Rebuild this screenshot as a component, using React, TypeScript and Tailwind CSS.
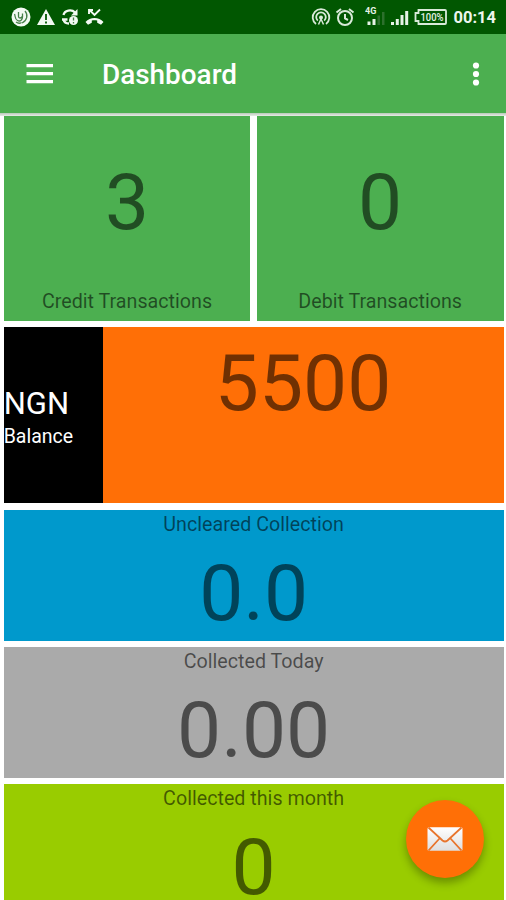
function StatusBar() {
  return (
    <div className="flex h-[34px] shrink-0 items-center justify-between bg-[#015701] pr-[10px] pl-[11px]">
      <div className="flex items-center gap-[5px]">
        <svg width="20" height="20" viewBox="0 0 20 20" fill="none">
          <circle cx="10" cy="10" r="9.5" fill="#f3faf3" />
          <path d="M3.5 7c1 2 0 5 3 6.500s5-1 5-3.500V6.500M7.500 5v4.500c0 2 3 2 3.500 0M14 4c3.500 4 2 9.500-3 12M5 15c2 1.500 4 1.500 5.500.5" stroke="#47804a" strokeWidth="1.3" />
        </svg>
        <svg width="20" height="18" viewBox="0 0 20 18">
          <path d="M10 1L19 17H1Z" fill="#f3faf3" />
          <path d="M10 6v6M10 13.5v2" stroke="#015701" strokeWidth="1.8" />
        </svg>
        <svg width="18" height="18" viewBox="0 0 18 18" fill="none">
          <path d="M2.500 7a6.500 5.500 0 0 1 11.500-2.500M8 15.500C5 15.500 3 14 2.500 11.500M1 11.500h5.500" stroke="#f3faf3" strokeWidth="2.300" />
          <path d="M16.500 1v6.500H10z" fill="#f3faf3" />
          <circle cx="12.500" cy="12.500" r="4.500" fill="#f3faf3" />
          <path d="M12.500 9.500v3M12.500 14v1.500" stroke="#477f48" strokeWidth="1.300" />
        </svg>
        <svg width="19" height="18" viewBox="0 0 19 18" fill="none" className="ml-[1px]">
          <path d="M4 1.500l5.500 5.500L15 1.500M4 6V2h4" stroke="#f3faf3" strokeWidth="1.900" />
          <path d="M.5 14C5 8.500 14 8.500 18.500 14L16 16.800l-3.800-2v-2.300c-1.500-.5-3.900-.5-5.400 0v2.300L3 16.800z" fill="#f3faf3" />
        </svg>
      </div>

      <div className="flex items-center">
        <svg width="20" height="20" viewBox="0 0 20 20" fill="none" stroke="#d9ead9" strokeWidth="1.8">
          <path d="M5 17a8.300 8.300 0 1 1 10 0M6.800 13.700a4.800 4.800 0 1 1 6.400 0" />
          <circle cx="10" cy="10.5" r="2" fill="#d9ead9" stroke="none" />
          <path d="M7.500 17.500L10 12l2.500 5.500" strokeWidth="1.500" />
        </svg>
        <svg width="20" height="20" viewBox="0 0 20 20" fill="none" stroke="#d9ead9" strokeWidth="2" className="ml-[4px]">
          <circle cx="10" cy="11" r="7" />
          <path d="M1.500 5.500L6 2M18.500 5.500L14 2M10 7v4.500l3 1.500" />
        </svg>
        <svg width="21" height="20" viewBox="0 0 21 20" className="ml-[10px]">
          <text x="0" y="7" fontSize="9" fontWeight="700" fontFamily="Roboto, sans-serif" fill="#e6f2e6">4G</text>
          <path d="M2.500 14.500h3V18h-3zM7.500 12h3v6h-3z" fill="#e6f2e6" />
          <path d="M12.500 8.500h2.500V18h-2.500zM17 5h2.500v13H17z" fill="#2d702d" />
        </svg>
        <svg width="19" height="20" viewBox="0 0 19 20" fill="#e6f2e6" className="ml-[4px]">
          <path d="M1 15h3v3H1zM5.800 12h3v6h-3zM10.500 8h3v10h-3zM15.200 4h3v14h-3z" />
        </svg>
        <svg width="33" height="16" viewBox="0 0 33 16" className="ml-[5px]">
          <path d="M4.500 1H31a1 1 0 0 1 1 1V14a1 1 0 0 1-1 1H4.500V12H1.500V4H4.500Z" fill="none" stroke="#d9ead9" strokeWidth="1.800" />
          <text x="6.500" y="11.800" fontSize="10.500" fontWeight="500" fontFamily="Roboto, sans-serif" fill="#e6f2e6" textLength="23" lengthAdjust="spacingAndGlyphs">100%</text>
        </svg>
        <span className="ml-[6px] pt-[2px] text-[16.5px] leading-[20px] font-bold text-[#eef6ee]">00:14</span>
      </div>
    </div>
  );
}

function Toolbar() {
  return (
    <header className="flex h-[79px] shrink-0 items-center bg-[#4caf50] text-white">
      <button className="ml-[21px] flex w-[38px] justify-center" aria-label="Open menu">
        <svg width="28" height="20" viewBox="0 0 28 20" fill="currentColor">
          <path d="M.5 0h26.500v3.300H.5zM.5 8h26.500v3.300H.5zM.5 16h26.500v3.300H.5z" />
        </svg>
      </button>
      <h1 className="ml-[43px] flex-1 pt-[2px] text-[27.9px] leading-[32px] font-medium">Dashboard</h1>
      <button className="mr-[26px]" aria-label="More options">
        <svg width="8" height="24" viewBox="0 0 8 24" fill="currentColor">
          <circle cx="4" cy="3.5" r="3.1" />
          <circle cx="4" cy="12" r="3.1" />
          <circle cx="4" cy="20.5" r="3.1" />
        </svg>
      </button>
    </header>
  );
}

function CountCard({ value, label }: { value: string; label: string }) {
  return (
    <div className="flex flex-1 flex-col items-center justify-between bg-[#4caf50] pt-[34px] pb-[6px] text-black/56">
      <span className="text-[78.5px] leading-[104px]">{value}</span>
      <span className="text-[19.7px] leading-[27px]">{label}</span>
    </div>
  );
}

function CollectionCard({ value, label, color }: { value: string; label: string; color: string }) {
  return (
    <div className={`${color} flex h-[131px] shrink-0 flex-col items-center text-black/56`}>
      <span className="pt-[1px] text-[19.7px] leading-[27px]">{label}</span>
      <span className="pt-[3px] text-[78.5px] leading-[104px]">{value}</span>
    </div>
  );
}

const collections = [
  { label: "Uncleared Collection", value: "0.0", color: "bg-[#0099cc]" },
  { label: "Collected Today", value: "0.00", color: "bg-[#aaaaaa]" },
  { label: "Collected this month", value: "0", color: "bg-[#99cc00]" },
];

export default function App() {
  return (
    <div className="relative flex h-[900px] w-[506px] flex-col overflow-hidden bg-white font-[Roboto,sans-serif]">
      <StatusBar />
      <Toolbar />
      <div className="h-[3px] shrink-0 bg-linear-to-b from-[#b9c9b9] to-[#e8ece8]" />

      <main className="flex flex-col gap-[6.3px] pr-[2.5px] pl-[3.7px]">
        <div className="flex h-[205px] shrink-0 gap-[6.4px]">
          <CountCard value="3" label="Credit Transactions" />
          <CountCard value="0" label="Debit Transactions" />
        </div>

        {/* Balance */}
        <div className="flex h-[176px] shrink-0">
          <div className="flex w-[99px] flex-col justify-center bg-black pt-[4px] text-white">
            <span className="text-[31px] leading-[38px]">NGN</span>
            <span className="text-[19.5px] leading-[27px]">Balance</span>
          </div>
          <div className="flex flex-1 justify-center bg-[#ff6f06] pt-[4px] text-black/56">
            <span className="text-[78.5px] leading-[104px]">5500</span>
          </div>
        </div>

        {collections.map((item) => (
          <CollectionCard key={item.label} {...item} />
        ))}
      </main>

      {/* Floating mail button */}
      <button
        className="absolute top-[800px] left-[406px] flex size-[78px] items-center justify-center rounded-full bg-[#ff6f06] shadow-[0_5px_8px_rgba(0,0,0,0.3)]"
        aria-label="Send message"
      >
        <svg width="36" height="24" viewBox="0 0 36 24">
          <defs>
            <linearGradient id="mail" x1="0" y1="0" x2="0" y2="1">
              <stop offset="0" stopColor="#ffffff" />
              <stop offset="1" stopColor="#dedede" />
            </linearGradient>
          </defs>
          <rect x="0.5" y="0.2" width="35" height="23.6" rx="1.5" fill="url(#mail)" />
          <path d="M1.500.5L15.500 13.500Q18 15.500 20.500 13.500L34.500.5M1.500 23.500L12.500 11.500M34.500 23.500L23.500 11.500" fill="none" stroke="#e8742c" strokeWidth="1.800" />
        </svg>
      </button>
    </div>
  );
}
